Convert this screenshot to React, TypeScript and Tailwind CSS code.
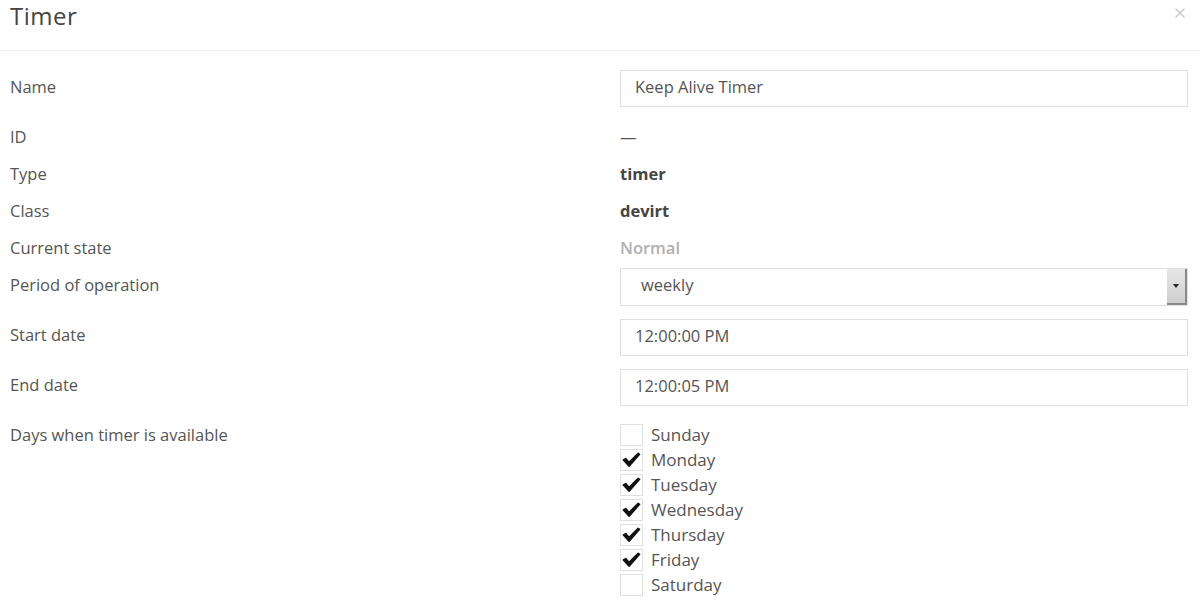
import { X } from 'lucide-react';

const days = [
  { name: 'Sunday', checked: false },
  { name: 'Monday', checked: true },
  { name: 'Tuesday', checked: true },
  { name: 'Wednesday', checked: true },
  { name: 'Thursday', checked: true },
  { name: 'Friday', checked: true },
  { name: 'Saturday', checked: false },
];

const Check = () => (
  <svg viewBox="0 0 22 22" className="w-[22px] h-[22px]">
    <path d="M2.5 11 L8.5 17.5 L19.5 5 L18 4 L8.5 13.5 L5 9.5 Z" fill="#111" stroke="#111" strokeWidth={1.6} strokeLinejoin="round" />
  </svg>
);

const TextBox = ({ value }: { value: string }) => (
  <div className="h-[37px] border border-[#e0e0e0] flex items-center px-[14px] pb-[3px] text-[#555]">{value}</div>
);

export default function App() {
  return (
    <div className="w-[1200px] h-[608px] bg-white overflow-hidden text-[16.5px] text-[#555]" style={{ fontFamily: '"Open Sans", "Liberation Sans", sans-serif' }}>
      <header className="h-[51px] border-b border-[#f0f0f0] flex items-start justify-between pl-[10px] pr-[12px]">
        <h1 className="text-[24px] leading-[32px] text-[#444] tracking-[0.5px]">Timer</h1>
        <X className="w-4 h-4 mt-[5px] text-[#c8c8c8]" strokeWidth={2} />
      </header>

      <div className="grid grid-cols-[610px_568px] pl-[10px] mt-[19px]">
        <div className="h-[37px] flex items-center pb-[2px]">Name</div>
        <TextBox value="Keep Alive Timer" />

        <div className="h-[37px] mt-[13px] flex items-center pb-[2px]">ID</div>
        <div className="h-[37px] mt-[13px] flex items-center pb-[2px]">—</div>

        <div className="h-[37px] flex items-center pb-[2px]">Type</div>
        <div className="h-[37px] flex items-center pb-[2px] font-bold text-[#444]">timer</div>

        <div className="h-[37px] flex items-center pb-[2px]">Class</div>
        <div className="h-[37px] flex items-center pb-[2px] font-bold text-[#444]">devirt</div>

        <div className="h-[37px] flex items-center pb-[2px]">Current state</div>
        <div className="h-[37px] flex items-center pb-[2px] font-semibold text-[#b0b0b0]">Normal</div>

        <div className="h-[37px] flex items-center pb-[3px]">Period of operation</div>
        <div className="h-[38px] border border-[#e0e0e0] flex items-center justify-between pl-[20px]">
          <span className="pb-[3px]">weekly</span>
          <div className="w-[20px] h-full bg-gradient-to-b from-[#e6e6e6] to-[#cfcfcf] border-r-2 border-b-2 border-[#8a8a8a] flex items-center justify-center">
            <svg viewBox="0 0 6 4" className="w-[6px] h-[4px]"><path d="M0 0 H6 L3 4 Z" fill="#222" /></svg>
          </div>
        </div>

        <div className="h-[37px] mt-[13px] flex items-center pb-[4px]">Start date</div>
        <div className="mt-[13px]"><TextBox value="12:00:00 PM" /></div>

        <div className="h-[37px] mt-[13px] flex items-center pb-[4px]">End date</div>
        <div className="mt-[13px]"><TextBox value="12:00:05 PM" /></div>

        <div className="mt-[16px] leading-[25px]">Days when timer is available</div>
        <div className="mt-[18px] flex flex-col gap-[3px]">
          {days.map((d) => (
            <label key={d.name} className="flex items-center gap-[8px] h-[22px]">
              <span className="w-[23px] h-[22px] border border-[#e0e0e0] flex items-center justify-center">
                {d.checked && <Check />}
              </span>
              <span className="text-[17px]">{d.name}</span>
            </label>
          ))}
        </div>
      </div>
    </div>
  );
}
